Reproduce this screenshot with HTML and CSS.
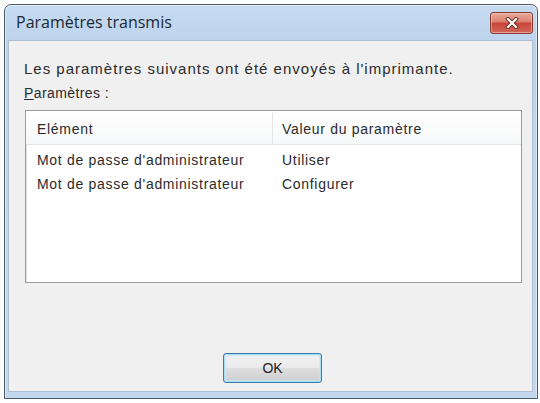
FILE: index.html
```html
<!DOCTYPE html>
<html lang="fr">
<head>
<meta charset="utf-8">
<title>Paramètres transmis</title>
<link rel="stylesheet" href="styles.css">
</head>
<body>
<div class="window">
  <div class="titlebar">
    <span class="title">Paramètres transmis</span>
    <div class="close">
      <svg width="14" height="12" viewBox="0 0 14 12">
        <path d="M3 2 L11 10 M11 2 L3 10" stroke="#6b2a22" stroke-width="4" stroke-linecap="square"/>
        <path d="M3 2 L11 10 M11 2 L3 10" stroke="#ffffff" stroke-width="2.2" stroke-linecap="square"/>
      </svg>
    </div>
  </div>
  <div class="client">
    <p class="msg">Les paramètres suivants ont été envoyés à l'imprimante.</p>
    <p class="label"><span class="acc">P</span>aramètres :</p>
    <div class="list">
      <div class="head">
        <div class="c1">Elément</div>
        <div class="c2">Valeur du paramètre</div>
      </div>
      <div class="rows">
        <div class="row">
          <div class="c1">Mot de passe d'administrateur</div>
          <div class="c2">Utiliser</div>
        </div>
        <div class="row">
          <div class="c1">Mot de passe d'administrateur</div>
          <div class="c2">Configurer</div>
        </div>
      </div>
    </div>
    <div class="actions">
      <button class="ok">OK</button>
    </div>
  </div>
</div>
</body>
</html>
```
FILE: styles.css
```css
html, body {
  margin: 0;
  padding: 0;
  background: #ffffff;
}

body {
  padding: 4px 2px 0 4px;
  font-family: "Liberation Sans", Arial, sans-serif;
  color: #2b2b2b;
}

.window {
  width: 534px;
  height: 395px;
  box-sizing: border-box;
  border: 1px solid #4d5b69;
  border-radius: 7px 7px 0 0;
  background: linear-gradient(#c6dbf1, #bcd3ec 40px, #c3d8ef);
  box-shadow: inset 0 1px 0 #e9f2fb, inset 1px 0 0 #dbe8f6, inset -1px 0 0 #dbe8f6;
  display: flex;
  flex-direction: column;
}

.titlebar {
  height: 35px;
  flex: none;
  display: flex;
  justify-content: space-between;
  align-items: flex-start;
  padding: 0 4px 0 11px;
}

.title {
  margin-top: 6px;
  font-family: "Open Sans", "Liberation Sans", sans-serif;
  font-size: 16px;
  line-height: 22px;
  color: #1c2833;
}

.close {
  margin-top: 7px;
  width: 43px;
  height: 22px;
  box-sizing: border-box;
  border: 1px solid #823a33;
  border-radius: 3px;
  background: linear-gradient(#eaa99c 0%, #dd8373 42%, #c8473a 52%, #d3675a 100%);
  box-shadow: inset 0 0 0 1px rgba(255, 210, 200, 0.5);
  display: flex;
  align-items: center;
  justify-content: center;
}

.client {
  flex: 1;
  margin: 0 4px 6px 3px;
  background: #f0f0f0;
  border: 1px solid #aebfd1;
  padding: 0 0 0 15px;
}

.msg {
  margin: 18px 0 0 0;
  font-size: 15px;
  line-height: 20px;
  letter-spacing: 1px;
}

.label {
  margin: 4px 0 0 0;
  font-size: 14px;
  line-height: 20px;
  letter-spacing: 0.4px;
}

.acc {
  text-decoration: underline;
}

.list {
  margin: 7px 0 0 1px;
  width: 497px;
  height: 173px;
  box-sizing: border-box;
  border: 1px solid #9c9c9c;
  background: #ffffff;
  box-shadow: inset 1px 1px 0 #e2e2e2;
}

.head {
  display: flex;
  height: 34px;
  background: linear-gradient(#ffffff, #f7f8f9);
  border-bottom: 1px solid #e3e5e7;
  align-items: center;
  font-size: 14px;
  letter-spacing: 0.7px;
  padding-top: 2px;
  box-sizing: border-box;
}

.head .c1 {
  width: 235px;
  padding-left: 11px;
  border-right: 1px solid #e3e5e7;
  align-self: stretch;
  display: flex;
  align-items: center;
}

.head .c2 {
  padding-left: 9px;
}

.rows {
  padding-top: 3px;
}

.row {
  display: flex;
  height: 24px;
  align-items: center;
  font-size: 14px;
  letter-spacing: 0.7px;
}

.row .c1 {
  width: 236px;
  padding-left: 11px;
}

.row .c2 {
  padding-left: 9px;
}

.actions {
  display: flex;
  justify-content: center;
  margin-top: 70px;
  padding-right: 11px;
}

.ok {
  width: 99px;
  height: 30px;
  box-sizing: border-box;
  border: 1px solid #3d7bad;
  border-radius: 3px;
  background: linear-gradient(#f2f2f2 0%, #ebebeb 48%, #dddddd 52%, #cfcfcf 100%);
  box-shadow: inset 0 0 0 1px #a9def7, inset 0 0 0 2px rgba(190, 232, 250, 0.6);
  font-family: "Liberation Sans", Arial, sans-serif;
  font-size: 14px;
  color: #222222;
  padding: 0;
}
```
